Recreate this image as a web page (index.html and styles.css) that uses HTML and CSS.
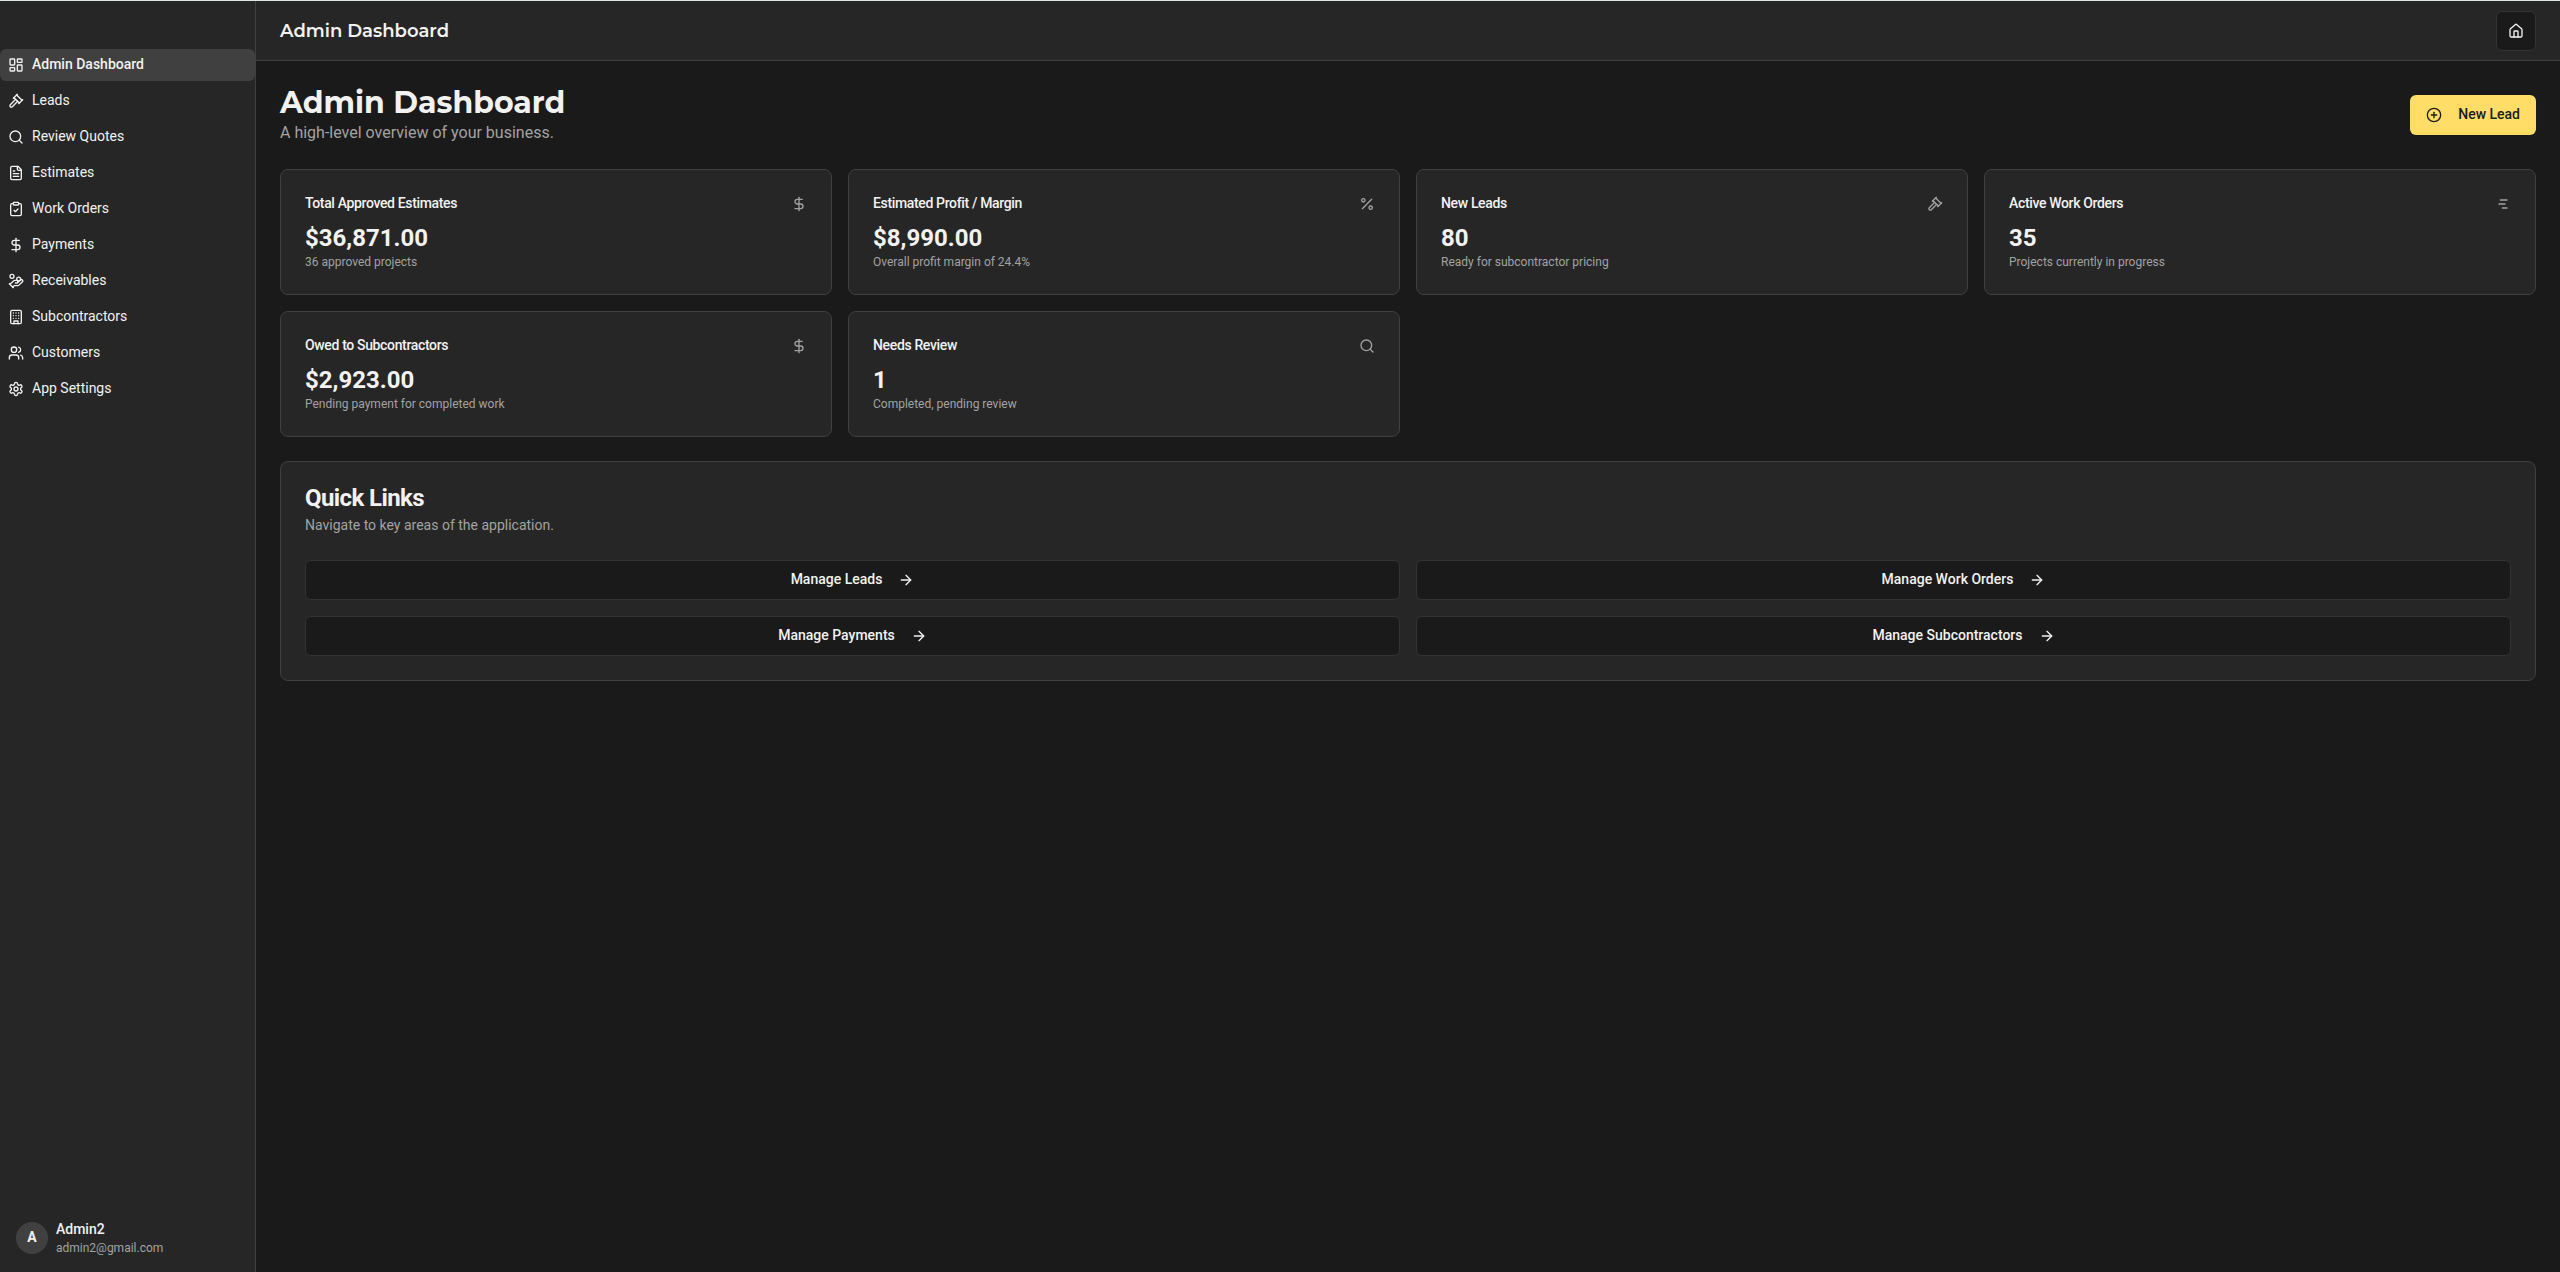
FILE: index.html
```html
<!DOCTYPE html>
<html lang="en">
<head>
  <meta charset="UTF-8">
  <title>Admin Dashboard</title>
  <link rel="stylesheet" href="styles.css">
</head>
<body>
  <!-- icons used more than once -->
  <svg class="sprite">
    <symbol id="gavel" viewBox="0 0 24 24"><path d="m14.5 12.5-8 8a2.119 2.119 0 1 1-3-3l8-8"/><path d="m16 16 6-6"/><path d="m8 8 6-6"/><path d="m9 7 8 8"/><path d="m21 11-8-8"/></symbol>
    <symbol id="search" viewBox="0 0 24 24"><circle cx="11" cy="11" r="8"/><path d="m21 21-4.3-4.3"/></symbol>
    <symbol id="dollar" viewBox="0 0 24 24"><path d="M12 2v20"/><path d="M17 5H9.5a3.5 3.5 0 0 0 0 7h5a3.5 3.5 0 0 1 0 7H6"/></symbol>
    <symbol id="arrow" viewBox="0 0 24 24"><path d="M5 12h14"/><path d="m12 5 7 7-7 7"/></symbol>
  </svg>

  <div class="layout">
    <aside class="sidebar">
      <nav class="menu">
        <a class="menu-item active">
          <svg class="icon" viewBox="0 0 24 24"><rect width="7" height="9" x="3" y="3" rx="1"/><rect width="7" height="5" x="14" y="3" rx="1"/><rect width="7" height="9" x="14" y="12" rx="1"/><rect width="7" height="5" x="3" y="16" rx="1"/></svg>
          <span>Admin Dashboard</span>
        </a>
        <a class="menu-item">
          <svg class="icon"><use href="#gavel"/></svg>
          <span>Leads</span>
        </a>
        <a class="menu-item">
          <svg class="icon"><use href="#search"/></svg>
          <span>Review Quotes</span>
        </a>
        <a class="menu-item">
          <svg class="icon" viewBox="0 0 24 24"><path d="M15 2H6a2 2 0 0 0-2 2v16a2 2 0 0 0 2 2h12a2 2 0 0 0 2-2V7Z"/><path d="M14 2v4a2 2 0 0 0 2 2h4"/><path d="M10 9H8"/><path d="M16 13H8"/><path d="M16 17H8"/></svg>
          <span>Estimates</span>
        </a>
        <a class="menu-item">
          <svg class="icon" viewBox="0 0 24 24"><rect width="8" height="4" x="8" y="2" rx="1"/><path d="M16 4h2a2 2 0 0 1 2 2v14a2 2 0 0 1-2 2H6a2 2 0 0 1-2-2V6a2 2 0 0 1 2-2h2"/><path d="m9 14 2 2 4-4"/></svg>
          <span>Work Orders</span>
        </a>
        <a class="menu-item">
          <svg class="icon"><use href="#dollar"/></svg>
          <span>Payments</span>
        </a>
        <a class="menu-item">
          <svg class="icon" viewBox="0 0 24 24"><path d="M11 15h2a2 2 0 1 0 0-4h-3c-.6 0-1.1.2-1.4.6L3 17"/><path d="m7 21 1.6-1.4c.3-.4.8-.6 1.4-.6h4c1.1 0 2.1-.4 2.8-1.2l4.6-4.4a2 2 0 0 0-2.75-2.91l-4.2 3.9"/><path d="m2 16 6 6"/><circle cx="16" cy="9" r="2.9"/><circle cx="6" cy="5" r="3"/></svg>
          <span>Receivables</span>
        </a>
        <a class="menu-item">
          <svg class="icon" viewBox="0 0 24 24"><rect width="16" height="20" x="4" y="2" rx="2"/><path d="M9 22v-4h6v4"/><path d="M8 6h.01M16 6h.01M12 6h.01M12 10h.01M12 14h.01M16 10h.01M16 14h.01M8 10h.01M8 14h.01"/></svg>
          <span>Subcontractors</span>
        </a>
        <a class="menu-item">
          <svg class="icon" viewBox="0 0 24 24"><path d="M16 21v-2a4 4 0 0 0-4-4H6a4 4 0 0 0-4 4v2"/><circle cx="9" cy="7" r="4"/><path d="M22 21v-2a4 4 0 0 0-3-3.87"/><path d="M16 3.13a4 4 0 0 1 0 7.75"/></svg>
          <span>Customers</span>
        </a>
        <a class="menu-item">
          <svg class="icon" viewBox="0 0 24 24"><path d="M12.22 2h-.44a2 2 0 0 0-2 2v.18a2 2 0 0 1-1 1.73l-.43.25a2 2 0 0 1-2 0l-.15-.08a2 2 0 0 0-2.73.73l-.22.38a2 2 0 0 0 .73 2.73l.15.1a2 2 0 0 1 1 1.72v.51a2 2 0 0 1-1 1.74l-.15.09a2 2 0 0 0-.73 2.73l.22.38a2 2 0 0 0 2.73.73l.15-.08a2 2 0 0 1 2 0l.43.25a2 2 0 0 1 1 1.73V20a2 2 0 0 0 2 2h.44a2 2 0 0 0 2-2v-.18a2 2 0 0 1 1-1.73l.43-.25a2 2 0 0 1 2 0l.15.08a2 2 0 0 0 2.73-.73l.22-.39a2 2 0 0 0-.73-2.73l-.15-.08a2 2 0 0 1-1-1.74v-.5a2 2 0 0 1 1-1.74l.15-.09a2 2 0 0 0 .73-2.73l-.22-.38a2 2 0 0 0-2.73-.73l-.15.08a2 2 0 0 1-2 0l-.43-.25a2 2 0 0 1-1-1.73V4a2 2 0 0 0-2-2z"/><circle cx="12" cy="12" r="3"/></svg>
          <span>App Settings</span>
        </a>
      </nav>

      <div class="user">
        <div class="avatar">A</div>
        <div>
          <div class="user-name">Admin2</div>
          <div class="user-email">admin2@gmail.com</div>
        </div>
      </div>
    </aside>

    <div class="content">
      <header class="topbar">
        <h2 class="topbar-title">Admin Dashboard</h2>
        <button class="btn btn-outline btn-icon">
          <svg class="icon" viewBox="0 0 24 24"><path d="M15 21v-8a1 1 0 0 0-1-1h-4a1 1 0 0 0-1 1v8"/><path d="M3 10a2 2 0 0 1 .709-1.528l7-5.999a2 2 0 0 1 2.582 0l7 5.999A2 2 0 0 1 21 10v9a2 2 0 0 1-2 2H5a2 2 0 0 1-2-2z"/></svg>
        </button>
      </header>

      <main>
        <div class="page-head">
          <div>
            <h1>Admin Dashboard</h1>
            <p class="subtitle">A high-level overview of your business.</p>
          </div>
          <button class="btn btn-primary">
            <svg class="icon" viewBox="0 0 24 24"><circle cx="12" cy="12" r="10"/><path d="M8 12h8"/><path d="M12 8v8"/></svg>
            <span>New Lead</span>
          </button>
        </div>

        <div class="stats">
          <div class="card">
            <div class="card-head">
              <h3>Total Approved Estimates</h3>
              <svg class="icon"><use href="#dollar"/></svg>
            </div>
            <div class="value">$36,871.00</div>
            <p class="note">36 approved projects</p>
          </div>
          <div class="card">
            <div class="card-head">
              <h3>Estimated Profit / Margin</h3>
              <svg class="icon" viewBox="0 0 24 24"><path d="M19 5 5 19"/><circle cx="6.5" cy="6.5" r="2.5"/><circle cx="17.5" cy="17.5" r="2.5"/></svg>
            </div>
            <div class="value">$8,990.00</div>
            <p class="note">Overall profit margin of 24.4%</p>
          </div>
          <div class="card">
            <div class="card-head">
              <h3>New Leads</h3>
              <svg class="icon"><use href="#gavel"/></svg>
            </div>
            <div class="value">80</div>
            <p class="note">Ready for subcontractor pricing</p>
          </div>
          <div class="card">
            <div class="card-head">
              <h3>Active Work Orders</h3>
              <svg class="icon" viewBox="0 0 24 24"><path d="M8 6h10"/><path d="M6 12h9"/><path d="M11 18h7"/></svg>
            </div>
            <div class="value">35</div>
            <p class="note">Projects currently in progress</p>
          </div>
          <div class="card">
            <div class="card-head">
              <h3>Owed to Subcontractors</h3>
              <svg class="icon"><use href="#dollar"/></svg>
            </div>
            <div class="value">$2,923.00</div>
            <p class="note">Pending payment for completed work</p>
          </div>
          <div class="card">
            <div class="card-head">
              <h3>Needs Review</h3>
              <svg class="icon"><use href="#search"/></svg>
            </div>
            <div class="value">1</div>
            <p class="note">Completed, pending review</p>
          </div>
        </div>

        <section class="card">
          <h3 class="links-title">Quick Links</h3>
          <p class="links-text">Navigate to key areas of the application.</p>
          <div class="links">
            <button class="btn btn-outline"><span>Manage Leads</span><svg class="icon"><use href="#arrow"/></svg></button>
            <button class="btn btn-outline"><span>Manage Work Orders</span><svg class="icon"><use href="#arrow"/></svg></button>
            <button class="btn btn-outline"><span>Manage Payments</span><svg class="icon"><use href="#arrow"/></svg></button>
            <button class="btn btn-outline"><span>Manage Subcontractors</span><svg class="icon"><use href="#arrow"/></svg></button>
          </div>
        </section>
      </main>
    </div>
  </div>
</body>
</html>
```

FILE: styles.css
```css
* {
  box-sizing: border-box;
  margin: 0;
  padding: 0;
}

body {
  font-family: Roboto, sans-serif;
  font-size: 14px;
  line-height: 20px;
  background: #1a1a1a;
  color: #f2f2f2;
}

.sprite {
  display: none;
}

.icon {
  width: 16px;
  height: 16px;
  flex-shrink: 0;
  fill: none;
  stroke: currentColor;
  stroke-width: 2;
  stroke-linecap: round;
  stroke-linejoin: round;
}

.layout {
  display: flex;
  height: 100vh;
  border-top: 1px solid #dfe8e6;
}

/* Sidebar */
.sidebar {
  width: 256px;
  display: flex;
  flex-direction: column;
  justify-content: space-between;
  padding-top: 48px;
  background: #262626;
  border-right: 1px solid #404040;
}

.menu {
  display: flex;
  flex-direction: column;
  gap: 4px;
}

.menu-item {
  display: flex;
  align-items: center;
  gap: 8px;
  height: 32px;
  padding: 0 8px;
  border-radius: 6px;
}

.menu-item span,
.btn span {
  padding-bottom: 2px;
}

.menu-item.active {
  background: #404040;
  font-weight: 500;
}

.user {
  display: flex;
  align-items: center;
  gap: 8px;
  padding: 16px;
}

.avatar {
  width: 32px;
  height: 32px;
  border-radius: 50%;
  background: #404040;
  font-weight: 700;
  line-height: 31px;
  text-align: center;
}

.user-name {
  padding-bottom: 2px;
  font-weight: 500;
  line-height: 18px;
}

.user-email {
  font-size: 12px;
  line-height: 16px;
  color: #a3a3a3;
}

/* Main area */
.content {
  flex: 1;
}

.topbar {
  display: flex;
  align-items: center;
  justify-content: space-between;
  height: 60px;
  padding: 0 24px;
  background: #262626;
  border-bottom: 1px solid #404040;
}

.topbar-title,
h1 {
  font-family: Montserrat, Lato, sans-serif;
}

.topbar-title {
  font-size: 18px;
  font-weight: 600;
  line-height: 28px;
}

main {
  display: flex;
  flex-direction: column;
  gap: 24px;
  padding: 24px;
}

.page-head {
  display: flex;
  align-items: center;
  justify-content: space-between;
}

h1 {
  font-size: 30px;
  font-weight: 700;
  line-height: 36px;
}

.subtitle {
  font-size: 16px;
  line-height: 24px;
  color: #a3a3a3;
}

.btn {
  display: flex;
  align-items: center;
  justify-content: center;
  gap: 16px;
  height: 40px;
  padding: 0 16px;
  border: none;
  border-radius: 6px;
  font: 500 14px/20px Roboto, sans-serif;
  color: #f2f2f2;
}

.btn-primary {
  background: #ffdd66;
  color: #1a1a1a;
}

.btn-outline {
  background: #1a1a1a;
  border: 1px solid #333;
}

.btn-icon {
  width: 40px;
  padding: 0;
}

.stats {
  display: grid;
  grid-template-columns: repeat(4, 1fr);
  gap: 16px;
}

.card {
  padding: 24px;
  background: #262626;
  border: 1px solid #404040;
  border-radius: 8px;
}

.card-head {
  display: flex;
  align-items: center;
  justify-content: space-between;
  margin-bottom: 8px;
}

.card-head h3 {
  padding-bottom: 2px;
  font-size: 14px;
  font-weight: 500;
  line-height: 18px;
  letter-spacing: -0.35px;
}

.card-head .icon {
  color: #a3a3a3;
}

.value {
  font-size: 24px;
  font-weight: 700;
  line-height: 32px;
}

.note {
  font-size: 12px;
  line-height: 16px;
  color: #a3a3a3;
}

/* Quick links */
.links-title {
  font-size: 24px;
  font-weight: 700;
  line-height: 24px;
  letter-spacing: -0.6px;
}

.links-text {
  margin: 5px 0 25px;
  color: #a3a3a3;
}

.links {
  display: grid;
  grid-template-columns: 1fr 1fr;
  gap: 16px;
}
```
